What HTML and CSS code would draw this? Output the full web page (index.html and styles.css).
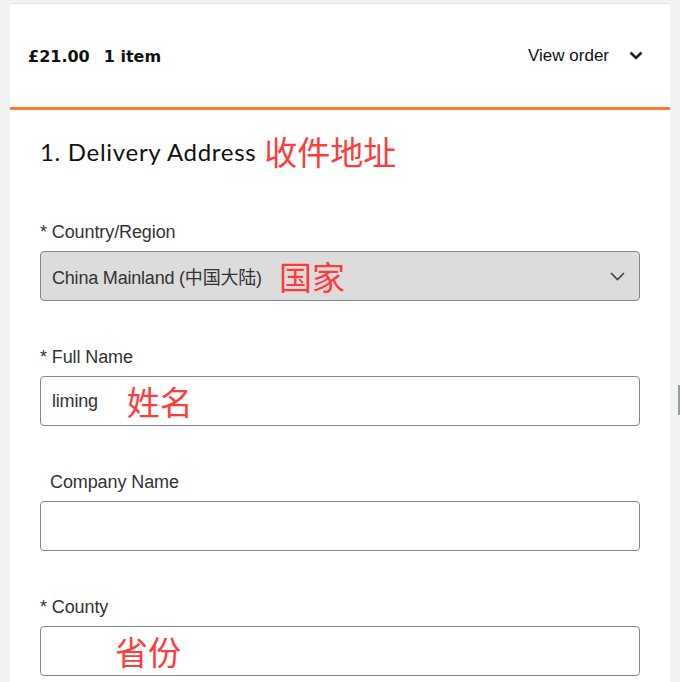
FILE: index.html
```html
<!DOCTYPE html>
<html>
<head>
<meta charset="utf-8">
<link rel="stylesheet" href="styles.css">
</head>
<body>
<div class="page">
  <div class="card">
    <div class="summary">
      <div class="total"><span>£21.00</span><span>1 item</span></div>
      <div class="view">View order
        <svg class="chev-bold" width="14" height="9" viewBox="0 0 14 9"><path d="M1.5 1.5 L7 7 L12.5 1.5" fill="none" stroke="#222" stroke-width="2.6"/></svg>
      </div>
    </div>
    <div class="form">
      <h2 class="heading">1. Delivery Address <span class="note big">收件地址</span></h2>
      <div class="field">
        <label class="label">* Country/Region</label>
        <div class="box select">
          <span class="value">China Mainland (中国大陆)</span><span class="note mark-country">国家</span>
          <svg class="chev" width="15" height="9" viewBox="0 0 15 9"><path d="M1 1 L7.5 7.5 L14 1" fill="none" stroke="#444" stroke-width="1.6"/></svg>
        </div>
      </div>
      <div class="field">
        <label class="label">* Full Name</label>
        <div class="box">
          <span class="value">liming</span><span class="note mark-name">姓名</span>
        </div>
      </div>
      <div class="field">
        <label class="label indent">Company Name</label>
        <div class="box"></div>
      </div>
      <div class="field">
        <label class="label">* County</label>
        <div class="box">
          <span class="note mark-county">省份</span>
        </div>
      </div>
    </div>
  </div>
  <div class="scroll-mark"></div>
</div>
</body>
</html>
```
FILE: styles.css
```css
html, body {
  margin: 0;
  padding: 0;
  background: #f1f2f2;
  height: 682px;
  overflow: hidden;
}
.page {
  position: relative;
  padding: 3px 10px 0 10px;
  height: 679px;
}
.card {
  background: #fff;
  border-top: 1px solid #e2e3e3;
  height: 678px;
}
.summary {
  display: flex;
  justify-content: space-between;
  align-items: center;
  height: 103px;
  padding: 0 27px 0 18px;
  border-bottom: 3px solid #ff7a35;
  color: #111;
}
.total {
  display: flex;
  gap: 14px;
  font-family: "DejaVu Sans", sans-serif;
  font-weight: bold;
  font-size: 16px;
  padding-top: 1px;
}
.view {
  display: flex;
  align-items: center;
  gap: 20px;
  font-family: "Liberation Sans", Arial, sans-serif;
  font-size: 17px;
}
.chev-bold { display: block; }
.form {
  padding: 23px 30px 0 30px;
  font-family: "Liberation Sans", Arial, sans-serif;
  color: #333;
}
.heading {
  margin: 0 0 52px 0;
  font-family: "Lato", "Liberation Sans", sans-serif;
  font-weight: normal;
  font-size: 24px;
  letter-spacing: 0.7px;
  color: #111;
  height: 36px;
  display: flex;
  align-items: center;
}
.heading .note { margin-left: 8px; letter-spacing: 0; }
.note {
  color: #ff3b3b;
  font-family: "Noto Sans CJK SC", sans-serif;
  font-size: 33px;
  line-height: 1;
}
.field {
  margin-bottom: 45px;
}
.label {
  display: block;
  font-size: 18px;
  line-height: 22px;
  margin-bottom: 8px;
  letter-spacing: -0.1px;
}
.label.indent { padding-left: 10px; }
.box {
  height: 48px;
  border: 1px solid #888;
  border-radius: 4px;
  display: flex;
  align-items: center;
  padding: 0 14px 0 11px;
  background: #fff;
}
.box.select {
  background: #dcdcdc;
}
.value {
  font-size: 18px;
  color: #333;
  font-family: "Liberation Sans", "Noto Sans CJK SC", sans-serif;
  letter-spacing: -0.2px;
}
.mark-country { margin-left: 17px; }
.mark-name { margin-left: 29px; }
.mark-county { margin-left: 63px; }
.chev { margin-left: auto; display: block; }
.scroll-mark {
  position: absolute;
  right: 0;
  top: 385px;
  width: 2px;
  height: 30px;
  background: #9a9a9a;
}
```
